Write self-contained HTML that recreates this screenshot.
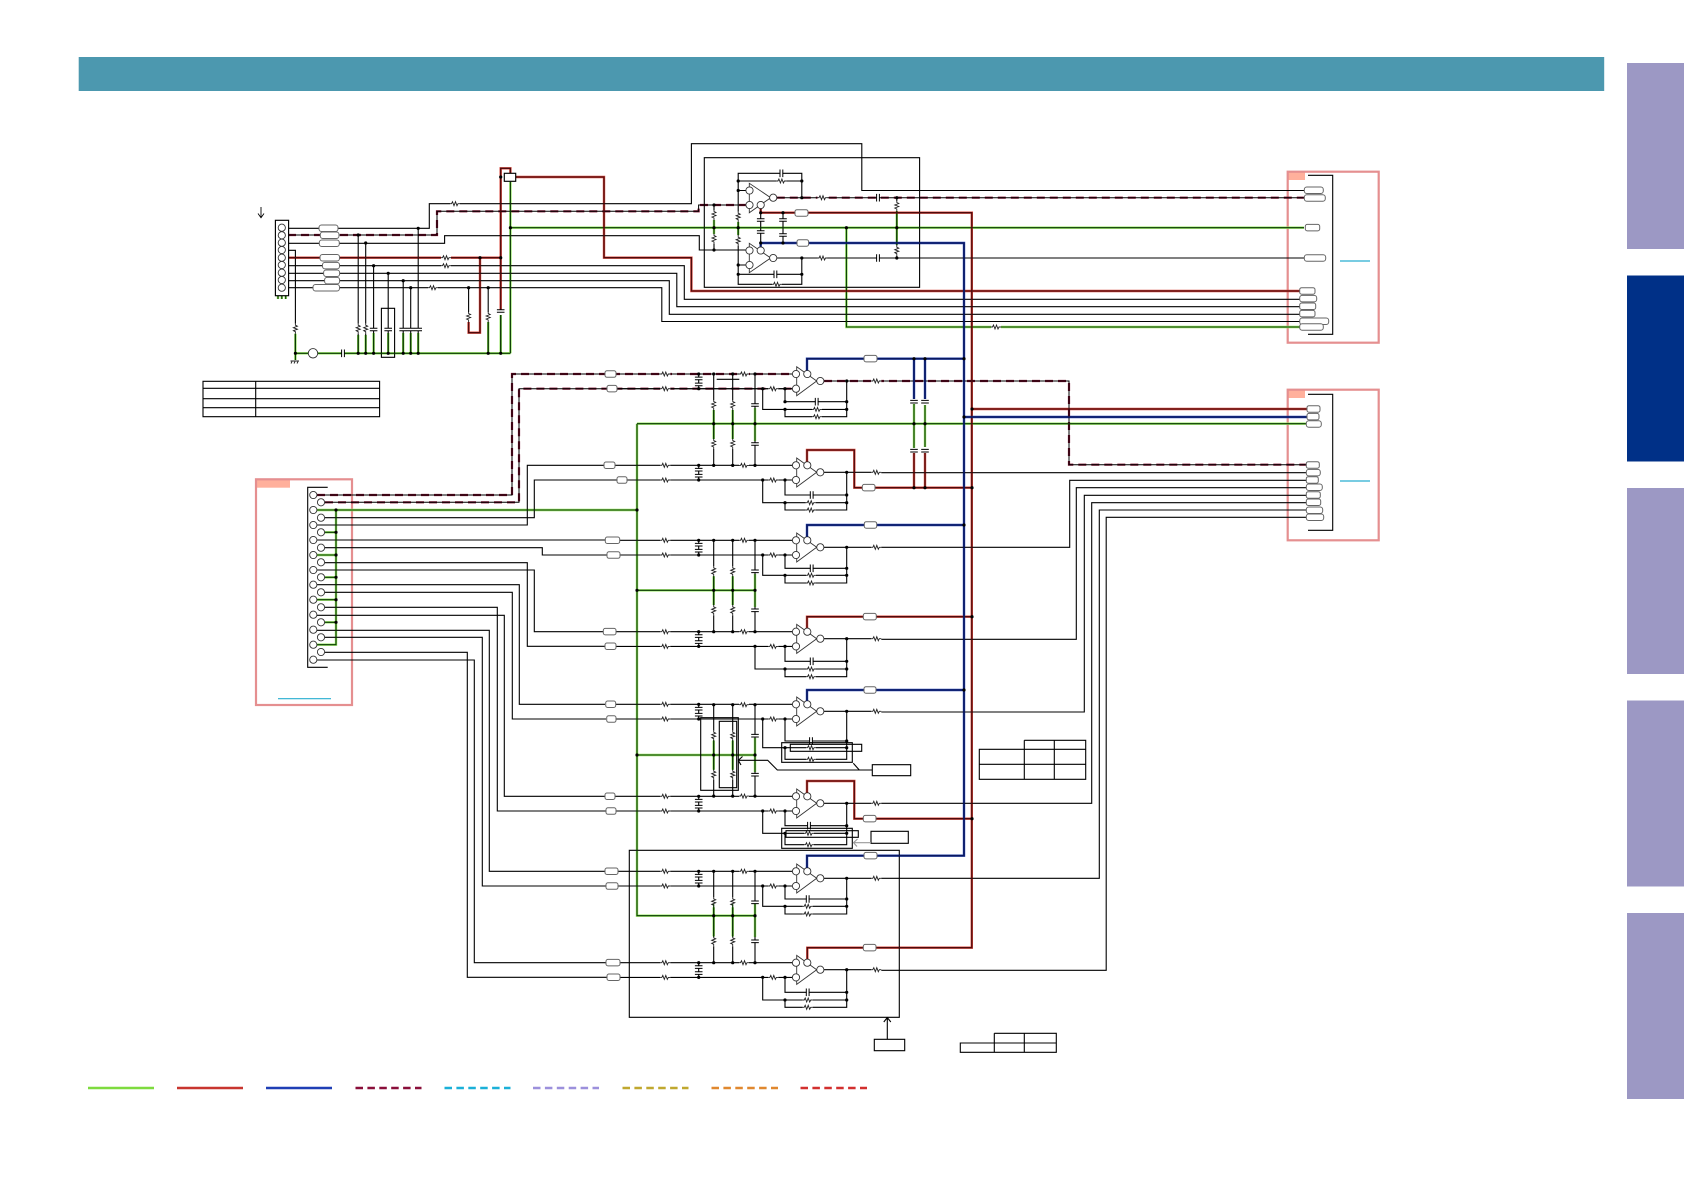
<!DOCTYPE html>
<html lang="en"><head><meta charset="utf-8"><title>Schematic</title>
<style>
html,body{margin:0;padding:0;background:#fff;width:1684px;height:1191px;overflow:hidden}
svg{position:absolute;left:0;top:0;display:block;fill:none}
.k{stroke:#000;stroke-width:1.1}
.gu{stroke:#93e45e;stroke-width:2.4}.go{stroke:#0b3a04;stroke-width:1.1}
.ru{stroke:#d8493c;stroke-width:2.4}.ro{stroke:#4f0a0c;stroke-width:1.3}
.bu{stroke:#2b49b6;stroke-width:2.4}.bo{stroke:#0a1860;stroke-width:1.6}
.du{stroke:#7a0a2a;stroke-width:2.2;stroke-dasharray:8 5}.do{stroke:#000;stroke-width:1}
.dots{stroke:#000;stroke-width:3.2;stroke-linecap:round}
.c{fill:#fff;stroke:#333;stroke-width:.9}
.l{fill:#fff;stroke:#666;stroke-width:1}
.p{stroke:#e58f90;stroke-width:2.2}
.cy{stroke:#27aed0;stroke-width:1.2}
</style></head><body>
<svg width="1684" height="1191" viewBox="0 0 1684 1191" xmlns="http://www.w3.org/2000/svg">
<defs>
<g id="rh"><path d="M-5 0H5" stroke="#fff" stroke-width="3"/><path d="M-5 0H-3.5L-2.5-2L-1 2L.5-2L2 2L3 0H5" stroke="#222" stroke-width=".9"/></g>
<g id="rv" transform="rotate(90)"><path d="M-5 0H5" stroke="#fff" stroke-width="3"/><path d="M-5 0H-3.5L-2.5-2L-1 2L.5-2L2 2L3 0H5" stroke="#222" stroke-width=".9"/></g>
<g id="ch"><path d="M-1 0H1" stroke="#fff" stroke-width="3"/><path d="M-1.4-3.8V3.8M1.4-3.8V3.8" stroke="#000" stroke-width="1"/></g>
<g id="cv"><path d="M0-1V1" stroke="#fff" stroke-width="3"/><path d="M-3.8-1.3H3.8M-3.8 1.3H3.8" stroke="#000" stroke-width="1"/></g>

<g id="st">
<path class="k" d="M610 0H793M610 14.7H792M698.7 0V14.7M824 7H880"/>
<use href="#rh" x="665.3" y="0"/><use href="#rh" x="665.3" y="14.7"/><use href="#rh" x="773.3" y="14.7"/><use href="#rh" x="876.3" y="7"/>
<use href="#cv" x="698.7" y="4.4"/><use href="#cv" x="698.7" y="10.4"/>
<path class="dots" d="M698.7 0h.01M698.7 14.7h.01M785 14.7h.01M846.7 7h.01"/>
<path d="M796.7-7.3V21.7L816.7 7Z" fill="#fff" stroke="#333" stroke-width=".9"/>
<circle class="c" cx="796" cy="0" r="3.6"/><circle class="c" cx="796" cy="14.7" r="3.6"/><circle class="c" cx="807.3" cy="0" r="3.6"/><circle class="c" cx="820.3" cy="7" r="3.6"/>
</g>

<g id="by">
<path class="k" d="M713.7 0V91.4M732.7 0V91.4M755 0V91.4"/>
<use href="#rv" x="713.7" y="31"/><use href="#rv" x="713.7" y="70"/><use href="#rv" x="732.7" y="31"/><use href="#rv" x="732.7" y="70"/>
<use href="#cv" x="755" y="31"/><use href="#cv" x="755" y="70"/>
<use href="#rh" x="744" y="0"/><use href="#rh" x="744" y="91.4"/>
<path class="dots" d="M713.7 0h.01M732.7 0h.01M755 0h.01M713.7 91.4h.01M732.7 91.4h.01M755 91.4h.01"/>
</g>

<path id="green" d="M510.4 353.3H295.4V333M295.4 353.3V360M510.4 353.3V181.7M510.4 227.7H1304M846.4 227.7V327H1304M358.2 335V353M365.7 335V353M373.6 333V353M388.2 333V353M403.2 333V353M410.7 333V353M418.2 333V353M488.2 322V353M500.7 315V353M714 220V234M738.2 222V235M896.8 211V245M278 295.7V299M281.8 295.7V299M285.7 295.7V299M637 423.7H1306M637 423.7V915.7H755M637 590.3H755M637 755H755M317 510H637M336 510V644.7H316.8M325 532.3H336M317 555H336M325 577.3H336M317 599.7H336M325 622.3H336M914 404V448M925 405V447M713.7 410V439M732.7 410V439M755 408V441M713.7 576V605M732.7 576V605M755 574V607M713.7 740V770M732.7 740V770M755 738V772M713.7 904V937M732.7 904V937M755 904V937"/>
<path id="red" d="M288 257.7H500.7M500.7 310V168.3H510.4V173.3M480 258V332.7H468.6V322M515.7 177H604V257.7H691.4V291H1300M760.7 207V212.7H971.8V947.7H807.3V959M807 461.8V450H854.3V487.7H972M807 628V616.7H972M807 793V781H854.3V818.7H972M972 409H1307M914 453V487.7M925 453V487.7"/>
<path id="blue" d="M760.7 247V243H964V855.7H807V868M807 370.5V358.7H964M807 537V525H964M807 701V690H964M964 417H1307M914 358.7V399M925 358.7V399"/>
<path id="dash" d="M288 235H437V211.3H698.6V205H745.7M776.8 197.7H1304M317 495H512V374H792M325 502.3H519V388.7H792M824 381H1069V464.7H1306"/>
</defs>

<!-- header and tabs -->
<rect x="78.7" y="57" width="1525.5" height="34" fill="#4c98af"/>
<rect x="1627" y="63" width="57" height="186" fill="#9c98c4"/>
<rect x="1627" y="275.5" width="57" height="186" fill="#003087"/>
<rect x="1627" y="488" width="57" height="186" fill="#9c98c4"/>
<rect x="1627" y="700.5" width="57" height="186" fill="#9c98c4"/>
<rect x="1627" y="913" width="57" height="186" fill="#9c98c4"/>

<!-- pink boxes -->
<rect x="1288" y="172" width="17" height="8" fill="#ffb09c"/>
<rect x="1288" y="390" width="17" height="8" fill="#ffb09c"/>
<rect x="256" y="480" width="34" height="7.7" fill="#ffb09c"/>
<rect class="p" x="1287.7" y="171.7" width="91" height="171"/>
<rect class="p" x="1287.7" y="389.7" width="91" height="150.6"/>
<rect class="p" x="256" y="479.3" width="96" height="225.7"/>
<path class="cy" d="M1340 261H1370M1340 481H1370M278 698.7H331"/>

<!-- coloured wires -->
<use href="#green" class="gu"/><use href="#red" class="ru"/><use href="#blue" class="bu"/>
<use href="#dash" class="du"/><use href="#dash" class="do"/>

<!-- black wiring -->
<path class="k" d="M1308 175.3H1332.7V334.3H1308M1308 394.3H1332.7V530.3H1308M327.7 487.3H307.7V667.3H327.7
M288 228.3H429.3V203.7H691.4V143.7H861.8V190.5H1304
M288 243.3H444.6V235.7H699.3V250H745.7
M288 265.7H684.3V299.3H1300M288 273.3H676.8V306.7H1300M288 280.7H669.3V314.3H1300M288 287.7H661.8V321.5H1300
M288 250.3H295.4V353.3
M358.2 235V353.3M365.7 243.3V353.3M373.6 265.7V353.3M388.2 273.3V353.3M403.2 280.7V353.3M410.7 287.7V353.3M418.2 228.3V353.3M488.2 287.7V353.3M468.6 287.7V322M500.7 315V353.3
M704.3 157.7H919.6V287.3H704.3Z
M738.2 181V173.3H801.8V197.7M738.2 181H801.8M738.2 181V284.3H801.8V258M738.2 274.3H801.8
M714 205V250M896.8 197.7V258M760.7 207V247M783 212.7V243M745.7 190.5H738.2M738.2 265H745.7M776.8 258H1304
M381.4 308.3H394.6V357.3H381.4Z
M325 517.7H534.3V480H617M317 525H527.3V465.3H605
M317 540H605M325 547.7H542.3V555H607
M325 562.7H527.3V646.3H605M317 570H534.3V631.7H603
M317 584.7H519.3V704.3H605M325 592.3H512.3V719H606
M325 607.3H497.3V811H606M317 615.3H504.3V796.3H605
M317 630.3H489.3V871.3H605M325 637.3H482.3V886H606
M325 652.3H467.3V977.3H607M317 660H474.3V962.7H606
M880 472.7H1306M880 547.3H1069.7V480.3H1306M880 639.3H1076.3V487.7H1306M880 712H1084.3V495.3H1306M880 803.3H1091.7V502.7H1306M880 878.3H1099.3V510H1306M880 970.3H1106.2V517.3H1306
M203 381.3H379.6V416.7H203ZM203 388.3H379.6M203 398.7H379.6M203 407.7H379.6M255.7 381.3V416.7
M979.3 749.3H1085.7V779.3H979.3ZM979.3 764.3H1085.7M1024.3 740.3H1085.7V779.3M1024.3 740.3V779.3M1054.3 740.3V779.3
M960.3 1043H1056.3V1052.3H960.3ZM994.3 1033.3H1056.3V1043M994.3 1033.3V1052.3M1024.3 1033.3V1052.3
M629.3 850.3H899.3V1017.3H629.3Z
M887.3 1017.3V1039.3M883.8 1022L887.3 1017.5L890.8 1022M874.3 1039.3H904.7V1050.7H874.3Z
M716.7 379.3H739.3"/>

<!-- amp stages -->
<use href="#st" y="374"/><use href="#st" y="465.3"/><use href="#st" y="540.3"/><use href="#st" y="631.7"/>
<use href="#st" y="704.3"/><use href="#st" y="796.3"/><use href="#st" y="871.3"/><use href="#st" y="962.7"/>
<use href="#by" y="374"/><use href="#by" y="540.3"/><use href="#by" y="704.7"/><use href="#by" y="871.3"/>

<!-- feedback networks -->
<path class="k" d="M785 388.7V401.7H846.7M762.7 388.7V409.4H846.7M785 409.4V416.7H846.7V381
M785 480V495H846.7M762.7 480V502.7H846.7M785 502.7V510H846.7V472.7
M785 555V568.3H846.7M762.7 555V575.3H846.7M785 575.3V583H846.7V547.3
M785 646.3V661.3H846.7M755 646.3V669H846.7M785 669V676.7H846.7V639.3
M785 719V741H846.7M762.7 719V747.7H846.7M785 747.7V759.3H846.7V712
M785 811V825.7H846.7M762.7 811V833.3H846.7M785 833.3V844.7H846.7V803.3
M785 886V899H846.7M762.7 886V906.3H846.7M785 906.3V914H846.7V878.3
M785 977.3V992.3H846.7M762.7 977.3V1000H846.7M785 1000V1007.3H846.7V970.3"/>
<use href="#ch" x="816.7" y="401.7"/><use href="#rh" x="817" y="409.4"/><use href="#rh" x="817" y="416.7"/>
<use href="#ch" x="811.7" y="495"/><use href="#rh" x="810.7" y="502.7"/><use href="#rh" x="810.7" y="510"/>
<use href="#ch" x="811.7" y="568.3"/><use href="#rh" x="811" y="575.3"/><use href="#rh" x="811" y="583"/>
<use href="#ch" x="811.7" y="661.3"/><use href="#rh" x="811" y="669"/><use href="#rh" x="811" y="676.7"/>
<use href="#ch" x="811" y="741"/><use href="#rh" x="811" y="747.7"/><use href="#rh" x="811" y="759.3"/>
<use href="#ch" x="809" y="825.7"/><use href="#rh" x="809" y="833.3"/><use href="#rh" x="809" y="844.7"/>
<use href="#ch" x="807.7" y="899"/><use href="#rh" x="807.7" y="906.3"/><use href="#rh" x="807.7" y="914"/>
<use href="#ch" x="807.7" y="992.3"/><use href="#rh" x="807.7" y="1000"/><use href="#rh" x="807.7" y="1007.3"/>

<!-- colour overlay -->
<use href="#green" class="go"/><use href="#red" class="ro"/><use href="#blue" class="bo"/>

<!-- callout boxes -->
<path class="k" d="M700.7 717.7H738.3V790.3H700.7ZM719.3 721.3H736.7V787.7H719.3ZM781.7 742.7H852.3V762.3H781.7ZM790.3 744.3H861.7V751.3H790.3Z
M872.3 764.7H910.7V775.7H872.3ZM872.3 770H777.3L767.7 760.3H738.3M742.5 756.5L738.3 760.3L741 765M853.3 763.3L859.3 770
M781.7 828.3H852.3V848.3H781.7ZM786 830.7H858.3V837.3H786ZM871 831.3H908.3V843.3H871Z"/>
<path d="M871 842.7H853.5M857.5 839L853.5 842.7L857 846.5" stroke="#999" stroke-width="1.1"/>

<!-- small parts, top-left -->
<use href="#rv" x="295.4" y="328.7"/><use href="#rv" x="358.2" y="328.7"/><use href="#rv" x="365.7" y="328.7"/>
<use href="#cv" x="373.6" y="329.5"/><use href="#cv" x="388.2" y="329.5"/><use href="#cv" x="403.2" y="329.5"/><use href="#cv" x="410.7" y="329.5"/><use href="#cv" x="418.2" y="329.5"/>
<use href="#rv" x="468.6" y="317"/><use href="#rv" x="488.2" y="317"/><use href="#cv" x="500.7" y="311"/>
<use href="#rh" x="433" y="287.7"/><use href="#rh" x="455" y="203.7"/><use href="#rh" x="446" y="265.7"/>
<use href="#rh" x="446" y="257.7"/><use href="#ch" x="343" y="353.3"/>
<circle cx="313" cy="353.3" r="4.7" class="c"/>
<path d="M261 207V217.5M258 213.5L261 217.7L264 213.5" stroke="#000" stroke-width=".9"/>
<path d="M290.5 361H299M291 363.5l1-2M294 363.5l1-2M297 363.5l1-2" stroke="#222" stroke-width=".9"/>
<rect x="275.4" y="220.3" width="13.2" height="75.4" fill="#fff" stroke="#000" stroke-width="1.15"/>
<g class="c"><circle cx="281.8" cy="227.7" r="3.6"/><circle cx="281.8" cy="235.3" r="3.6"/><circle cx="281.8" cy="242.7" r="3.6"/><circle cx="281.8" cy="250" r="3.6"/><circle cx="281.8" cy="257.7" r="3.6"/><circle cx="281.8" cy="265" r="3.6"/><circle cx="281.8" cy="272.7" r="3.6"/><circle cx="281.8" cy="280" r="3.6"/><circle cx="281.8" cy="287.7" r="3.6"/></g>
<rect x="504.3" y="173.3" width="11.4" height="8" fill="#fff" stroke="#000" stroke-width="1.15"/>

<!-- top amp cluster -->
<path d="M749.3 183.3V212.7L770.7 197.7Z" fill="#fff" stroke="#333" stroke-width=".9"/>
<path d="M749.3 243.3V272.7L770.7 258Z" fill="#fff" stroke="#333" stroke-width=".9"/>
<g class="c"><circle cx="749.5" cy="190.5" r="3.6"/><circle cx="749.5" cy="205" r="3.6"/><circle cx="760.7" cy="205" r="3.6"/><circle cx="773.2" cy="197.7" r="3.6"/><circle cx="749.5" cy="250.5" r="3.6"/><circle cx="749.5" cy="265" r="3.6"/><circle cx="760.7" cy="250.5" r="3.6"/><circle cx="773.2" cy="258" r="3.6"/></g>
<use href="#rv" x="714" y="215"/><use href="#rv" x="714" y="239"/><use href="#rv" x="738.2" y="216.7"/><use href="#rv" x="738.2" y="240.7"/><use href="#rv" x="896.8" y="206"/><use href="#rv" x="896.8" y="250.7"/>
<use href="#ch" x="781.4" y="173.3"/><use href="#ch" x="775.4" y="274.3"/><use href="#rh" x="781.4" y="181"/><use href="#rh" x="777" y="284.3"/>
<use href="#rh" x="822.5" y="197.7"/><use href="#rh" x="822.5" y="258"/><use href="#rh" x="996" y="327"/>
<use href="#cv" x="760.7" y="220"/><use href="#cv" x="760.7" y="232"/><use href="#cv" x="783" y="220"/><use href="#cv" x="783" y="235"/>
<use href="#ch" x="878" y="197.7"/><use href="#ch" x="878" y="258"/>
<use href="#cv" x="914" y="401.7"/><use href="#cv" x="914" y="450.7"/><use href="#cv" x="925" y="401.7"/><use href="#cv" x="925" y="450.7"/>

<!-- dots -->
<path class="dots" d="M358.2 235h.01M365.7 243h.01M373.6 265.7h.01M388.2 273.3h.01M403.2 280.7h.01M410.7 287.7h.01M418.2 228.3h.01M468.6 287.7h.01M488.2 287.7h.01M480 257.7h.01M500.7 257.7h.01M500.7 177h.01M510.4 227.7h.01M295.4 353.3h.01M358.2 353.3h.01M365.7 353.3h.01M373.6 353.3h.01M388.2 353.3h.01M403.2 353.3h.01M410.7 353.3h.01M418.2 353.3h.01M488.2 353.3h.01M500.7 353.3h.01
M714 205h.01M714 227.7h.01M714 250h.01M738.2 181h.01M738.2 190.5h.01M738.2 227.7h.01M738.2 265h.01M738.2 274.3h.01M801.8 181h.01M801.8 197.7h.01M801.8 258h.01M801.8 274.3h.01M896.8 197.7h.01M896.8 227.7h.01M896.8 258h.01M783 212.7h.01M783 243h.01M760.7 243h.01M760.7 212.7h.01M846.4 227.7h.01
M336 510h.01M336 532.3h.01M336 555h.01M336 577.3h.01M336 599.7h.01M336 622.3h.01M637 510h.01M637 590.3h.01M637 755h.01
M713.7 423.7h.01M732.7 423.7h.01M755 423.7h.01M713.7 590.3h.01M732.7 590.3h.01M755 590.3h.01M713.7 755h.01M732.7 755h.01M755 755h.01M713.7 915.7h.01M732.7 915.7h.01M755 915.7h.01
M914 358.7h.01M925 358.7h.01M914 423.7h.01M925 423.7h.01M914 487.7h.01M925 487.7h.01M964 358.7h.01M964 525h.01M964 690h.01M964 417h.01M972 409h.01M972 487.7h.01M972 616.7h.01M972 818.7h.01
M762.7 388.7h.01M785 401.7h.01M785 409.4h.01M846.7 401.7h.01M846.7 409.4h.01
M762.7 480h.01M846.7 495h.01M785 502.7h.01M846.7 502.7h.01
M762.7 555h.01M846.7 568.3h.01M785 575.3h.01M846.7 575.3h.01
M755 646.3h.01M846.7 661.3h.01M785 669h.01M846.7 669h.01
M762.7 719h.01M846.7 741h.01M785 747.7h.01M846.7 747.7h.01
M762.7 811h.01M846.7 825.7h.01M785 833.3h.01M846.7 833.3h.01
M762.7 886h.01M846.7 899h.01M785 906.3h.01M846.7 906.3h.01
M762.7 977.3h.01M846.7 992.3h.01M785 1000h.01M846.7 1000h.01"/>

<!-- left connector circles -->
<g class="c">
<circle cx="313.3" cy="495" r="3.6"/><circle cx="321" cy="502.3" r="3.6"/><circle cx="313.3" cy="510" r="3.6"/><circle cx="321" cy="517.7" r="3.6"/><circle cx="313.3" cy="525" r="3.6"/><circle cx="321" cy="532.3" r="3.6"/><circle cx="313.3" cy="540" r="3.6"/><circle cx="321" cy="547.7" r="3.6"/><circle cx="313.3" cy="555" r="3.6"/><circle cx="321" cy="562.3" r="3.6"/><circle cx="313.3" cy="570" r="3.6"/><circle cx="321" cy="577.3" r="3.6"/><circle cx="313.3" cy="584.7" r="3.6"/><circle cx="321" cy="592.3" r="3.6"/><circle cx="313.3" cy="599.7" r="3.6"/><circle cx="321" cy="607.3" r="3.6"/><circle cx="313.3" cy="614.7" r="3.6"/><circle cx="321" cy="622.3" r="3.6"/><circle cx="313.3" cy="629.7" r="3.6"/><circle cx="321" cy="637.3" r="3.6"/><circle cx="313.3" cy="644.7" r="3.6"/><circle cx="321" cy="652" r="3.6"/><circle cx="313.3" cy="659.7" r="3.6"/>
</g>

<!-- labels -->
<g class="l">
<rect x="319" y="225" width="19" height="6.5" rx="2.5"/><rect x="320.3" y="232" width="18.7" height="6.5" rx="2.5"/><rect x="319.3" y="240" width="20" height="6.5" rx="2.5"/><rect x="320" y="254.5" width="19.5" height="6.5" rx="2.5"/><rect x="322.5" y="262.4" width="17" height="6.5" rx="2.5"/><rect x="323.6" y="270" width="16" height="6.5" rx="2.5"/><rect x="324.6" y="277.4" width="15" height="6.5" rx="2.5"/><rect x="313" y="284.5" width="26.5" height="6.5" rx="2.5"/>
<rect x="795" y="209.7" width="13" height="6.5" rx="2"/><rect x="797" y="239.7" width="11.6" height="6.5" rx="2"/>
<rect x="1304.3" y="187" width="19" height="6.5" rx="2.5"/><rect x="1304.3" y="194.7" width="21" height="6.5" rx="2.5"/><rect x="1305.3" y="224.4" width="14.4" height="6.5" rx="2"/><rect x="1304.3" y="254.7" width="21.4" height="6.5" rx="2.5"/>
<rect x="1299.7" y="287.7" width="15.3" height="6.5" rx="2"/><rect x="1299.7" y="295.4" width="17" height="6.5" rx="2.5"/><rect x="1299.7" y="303" width="16" height="6.5" rx="2"/><rect x="1299.7" y="310.4" width="15.3" height="6.5" rx="2"/><rect x="1299.7" y="318" width="29" height="6.5" rx="2.5"/><rect x="1299.7" y="323.7" width="23.6" height="6.5" rx="2.5"/>
<rect x="1307" y="405.7" width="13" height="6.5" rx="2"/><rect x="1307" y="413.4" width="12" height="6.5" rx="2"/><rect x="1306.3" y="420.7" width="15" height="6.5" rx="2.5"/>
<rect x="1306.3" y="461.7" width="13" height="6.5" rx="2"/><rect x="1306.3" y="469.4" width="14" height="6.5" rx="2.5"/><rect x="1306.3" y="476.7" width="12" height="6.5" rx="2"/><rect x="1306.3" y="484" width="16" height="6.5" rx="2.5"/><rect x="1306.3" y="491.7" width="14" height="6.5" rx="2"/><rect x="1306.3" y="499" width="14.4" height="6.5" rx="2"/><rect x="1306.3" y="507" width="16.4" height="6.5" rx="2.5"/><rect x="1306.3" y="514" width="17.4" height="6.5" rx="2.5"/>
<rect x="605" y="370.8" width="11" height="6.5" rx="2"/><rect x="607" y="385.4" width="10" height="6.5" rx="2"/>
<rect x="604" y="462" width="11" height="6.5" rx="2"/><rect x="617" y="476.8" width="10" height="6.5" rx="2"/>
<rect x="605.3" y="537" width="14.4" height="6.5" rx="2"/><rect x="607" y="551.8" width="13" height="6.5" rx="2"/>
<rect x="603.3" y="628.4" width="12.7" height="6.5" rx="2"/><rect x="605" y="643" width="11" height="6.5" rx="2"/>
<rect x="605.7" y="701" width="10" height="6.5" rx="2"/><rect x="606.7" y="715.8" width="9.3" height="6.5" rx="2"/>
<rect x="605" y="793" width="10" height="6.5" rx="2"/><rect x="606" y="807.8" width="10" height="6.5" rx="2"/>
<rect x="605" y="868" width="13" height="6.5" rx="2"/><rect x="606" y="882.8" width="12" height="6.5" rx="2"/>
<rect x="606" y="959.4" width="14" height="6.5" rx="2"/><rect x="607" y="974" width="13" height="6.5" rx="2"/>
<rect x="864" y="355.4" width="13" height="6.5" rx="2"/><rect x="862.3" y="484.4" width="12.7" height="6.5" rx="2"/><rect x="864.3" y="521.7" width="12.4" height="6.5" rx="2"/><rect x="863.3" y="613.4" width="13" height="6.5" rx="2"/><rect x="864" y="686.7" width="12" height="6.5" rx="2"/><rect x="863.3" y="815.4" width="12.7" height="6.5" rx="2"/><rect x="864" y="852.4" width="13" height="6.5" rx="2"/><rect x="863.3" y="944.4" width="12.7" height="6.5" rx="2"/>
</g>

<!-- legend -->
<g stroke-width="2.6">
<path d="M88 1088H154" stroke="#7edb3f"/>
<path d="M177 1088H243" stroke="#c8362f"/>
<path d="M266 1088H332" stroke="#1f3fb5"/>
<path d="M355.5 1088H421.5" stroke="#8a0f3a" stroke-dasharray="7.5 4.4"/>
<path d="M444.5 1088H510.5" stroke="#1bb0d8" stroke-dasharray="7.5 4.4"/>
<path d="M533 1088H599" stroke="#9c90dc" stroke-dasharray="7.5 4.4"/>
<path d="M622.5 1088H688.5" stroke="#c0a82f" stroke-dasharray="7.5 4.4"/>
<path d="M711.5 1088H778" stroke="#e0882f" stroke-dasharray="7.5 4.4"/>
<path d="M800.5 1088H867" stroke="#d2302f" stroke-dasharray="7.5 4.4"/>
</g>
</svg>
</body></html>
